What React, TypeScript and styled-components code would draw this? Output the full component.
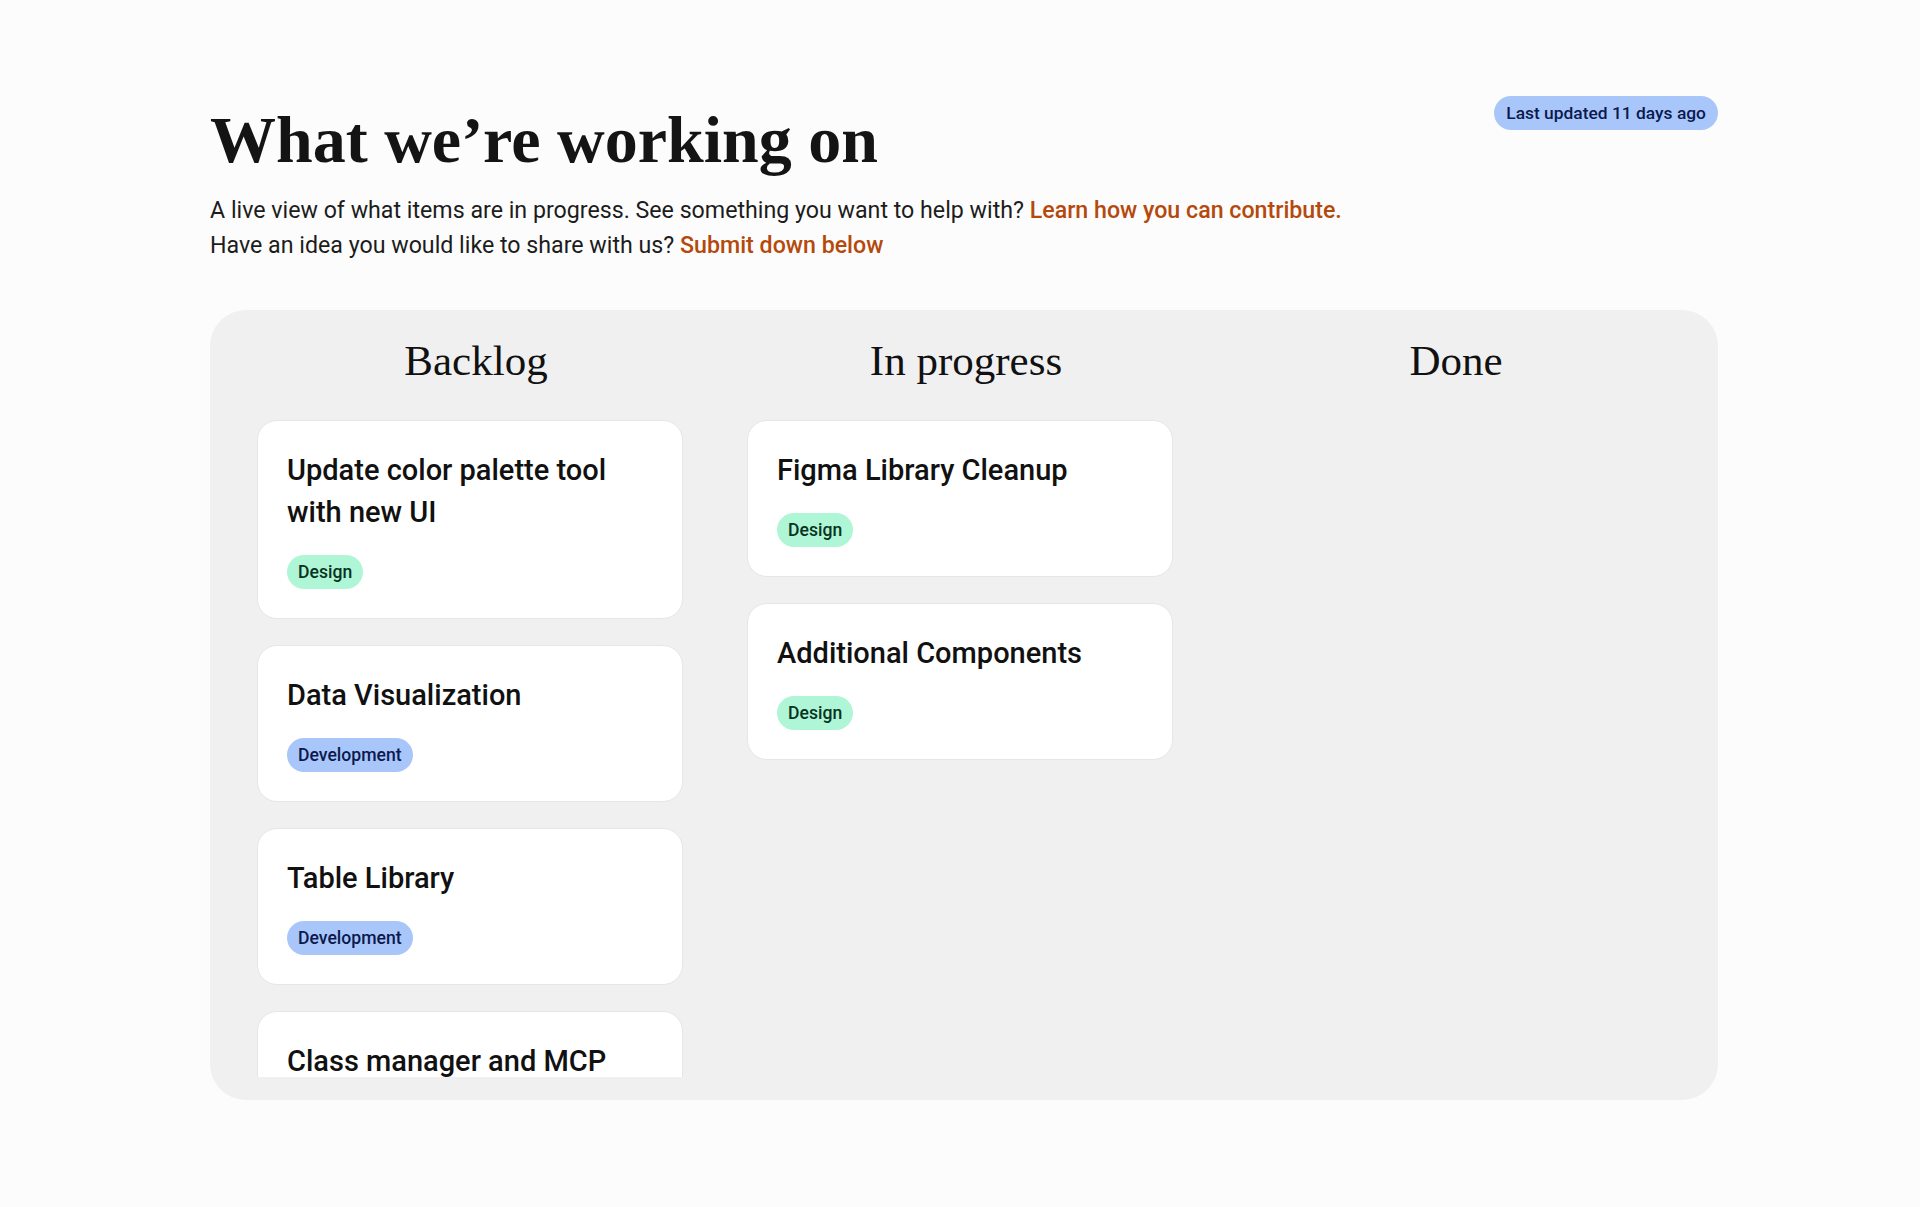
import React from "react";
import styled, { createGlobalStyle } from "styled-components";

const GlobalStyle = createGlobalStyle`
  * {
    box-sizing: border-box;
  }
  body {
    margin: 0;
    background: #fcfcfc;
    font-family: Roboto, "Liberation Sans", sans-serif;
    color: #1a1a1a;
  }
`;

const Page = styled.main`
  width: 1508px;
  margin-left: 210px;
  padding-top: 96px;
`;

const Header = styled.header`
  display: flex;
  justify-content: space-between;
  align-items: flex-start;
`;

const Title = styled.h1`
  margin: 1px 0 0;
  font-family: "Liberation Serif", serif;
  font-weight: 700;
  font-size: 66px;
  line-height: 85px;
  color: #141414;
`;

const Updated = styled.span`
  display: inline-block;
  padding: 7px 12px;
  border-radius: 999px;
  background: #a9c6fb;
  color: #0b1a4d;
  font-size: 17.4px;
  line-height: 20px;
  font-weight: 500;
`;

const Intro = styled.p`
  margin: 11px 0 0;
  font-size: 23.2px;
  line-height: 35px;
  color: #1c1c1c;
`;

const Link = styled.a`
  color: #b5490c;
  font-weight: 500;
  text-decoration: none;
`;

const Board = styled.section`
  margin-top: 47px;
  height: 790px;
  padding: 24px 55px 23px 47px;
  border-radius: 36px;
  background: #f0f0f0;
  display: grid;
  grid-template-columns: repeat(3, 1fr);
  gap: 64px;
`;

const Column = styled.div`
  display: flex;
  flex-direction: column;
  min-height: 0;
  overflow: hidden;
`;

const ColumnTitle = styled.h2`
  margin: 2px 0 34px;
  padding-left: 12px;
  text-align: center;
  font-family: "Liberation Serif", serif;
  font-weight: 400;
  font-size: 43px;
  line-height: 50px;
  color: #111;
`;

const CardList = styled.div`
  display: flex;
  flex-direction: column;
  gap: 26px;
`;

const Card = styled.article`
  flex-shrink: 0;
  padding: 28px 29px 29px;
  border-radius: 20px;
  background: #fff;
  border: 1px solid #e6e6e6;
`;

const CardTitle = styled.h3`
  margin: 0 0 22px;
  font-size: 29px;
  line-height: 42px;
  font-weight: 500;
  color: #111;
`;

const Tag = styled.span<{ $kind: "design" | "development" }>`
  display: inline-block;
  padding: 7px 11px;
  border-radius: 999px;
  font-size: 17.6px;
  line-height: 20px;
  font-weight: 500;
  background: ${({ $kind }) => ($kind === "design" ? "#aef6d6" : "#a9c6fb")};
  color: ${({ $kind }) => ($kind === "design" ? "#07331f" : "#0b1a4d")};
`;

type Item = { title: string; tag: "design" | "development" };

const columns: { name: string; items: Item[] }[] = [
  {
    name: "Backlog",
    items: [
      { title: "Update color palette tool with new UI", tag: "design" },
      { title: "Data Visualization", tag: "development" },
      { title: "Table Library", tag: "development" },
      { title: "Class manager and MCP", tag: "development" },
    ],
  },
  {
    name: "In progress",
    items: [
      { title: "Figma Library Cleanup", tag: "design" },
      { title: "Additional Components", tag: "design" },
    ],
  },
  { name: "Done", items: [] },
];

const tagLabel = { design: "Design", development: "Development" };

const App = () => {
  return (
    <>
      <GlobalStyle />
      <Page>
        <Header>
          <Title>What we’re working on</Title>
          <Updated>Last updated 11 days ago</Updated>
        </Header>
        <Intro>
          A live view of what items are in progress. See something you want to
          help with? <Link href="#">Learn how you can contribute.</Link>
          <br />
          Have an idea you would like to share with us?{" "}
          <Link href="#">Submit down below</Link>
        </Intro>
        <Board>
          {columns.map((col) => (
            <Column key={col.name}>
              <ColumnTitle>{col.name}</ColumnTitle>
              <CardList>
                {col.items.map((item) => (
                  <Card key={item.title}>
                    <CardTitle>{item.title}</CardTitle>
                    <Tag $kind={item.tag}>{tagLabel[item.tag]}</Tag>
                  </Card>
                ))}
              </CardList>
            </Column>
          ))}
        </Board>
      </Page>
    </>
  );
};

export default App;
